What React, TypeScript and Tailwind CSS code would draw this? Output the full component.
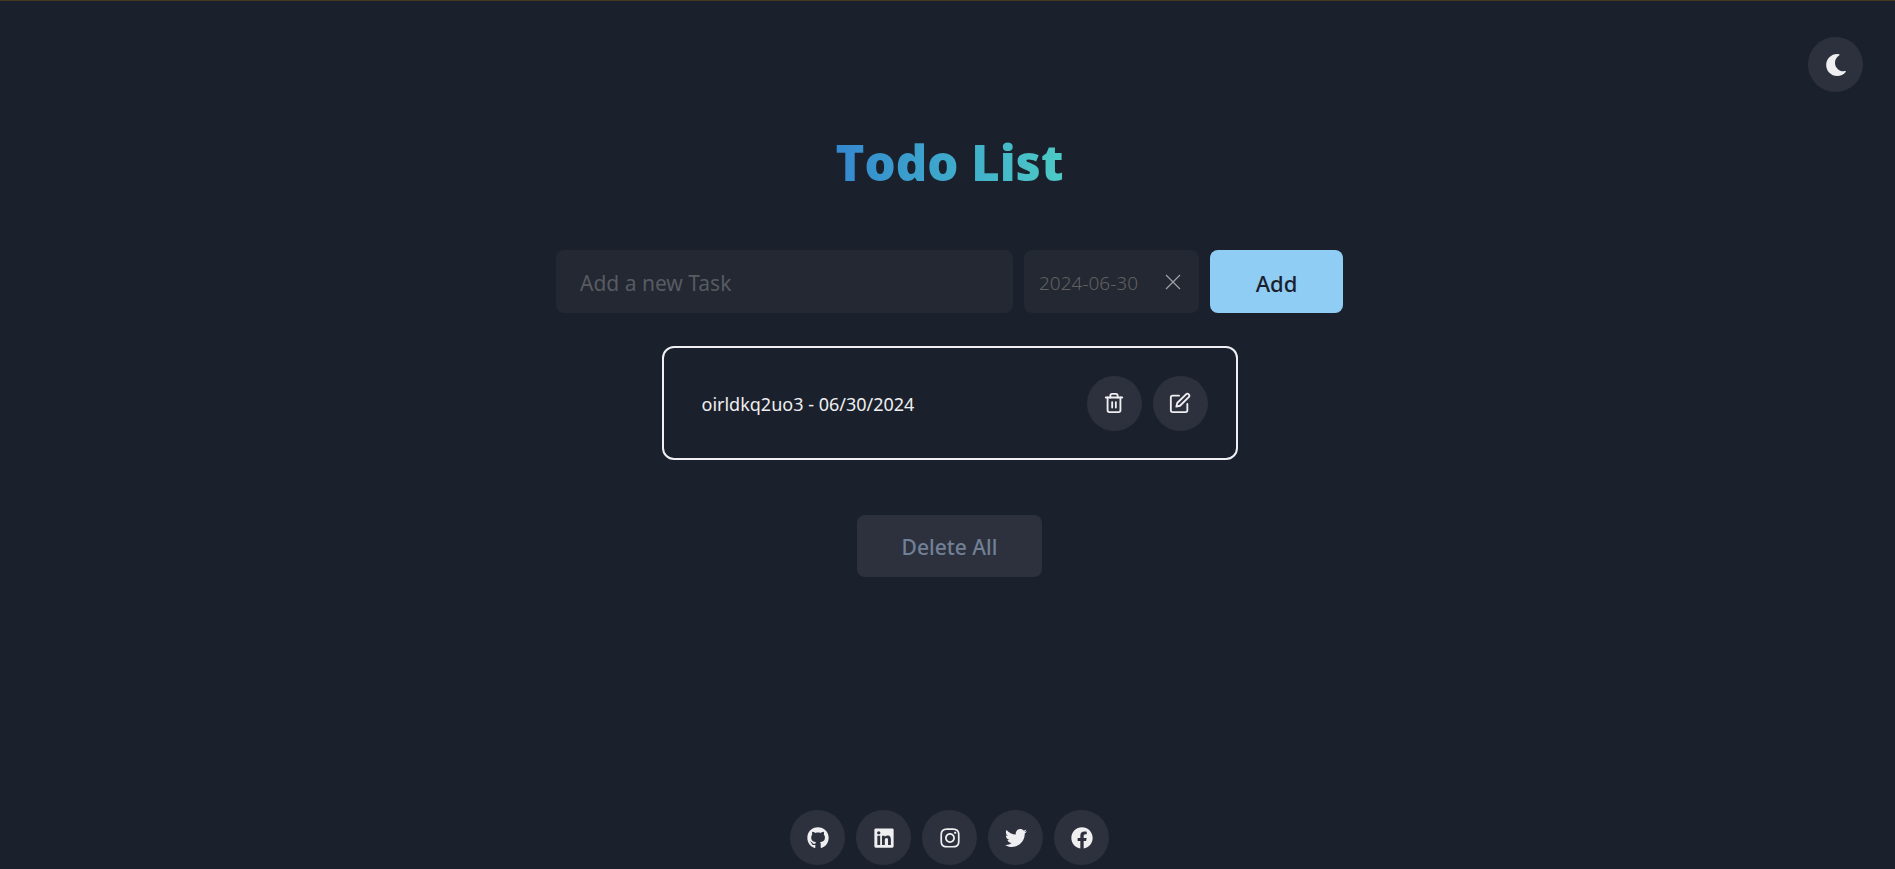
import { useState } from "react";
import type { ReactNode } from "react";
import { FaGithub, FaLinkedin, FaInstagram, FaTwitter, FaFacebook, FaMoon } from "react-icons/fa";
import { FiTrash2, FiEdit } from "react-icons/fi";

const circle =
  "flex size-[55px] shrink-0 items-center justify-center rounded-full bg-[#2d313d] text-[#efeff1] hover:bg-[#3c404c]";

const socials: { name: string; icon: ReactNode }[] = [
  { name: "GitHub", icon: <FaGithub size={22} /> },
  { name: "LinkedIn", icon: <FaLinkedin size={22} /> },
  { name: "Instagram", icon: <FaInstagram size={22} /> },
  { name: "Twitter", icon: <FaTwitter size={22} /> },
  { name: "Facebook", icon: <FaFacebook size={22} /> },
];

export default function App() {
  const [task, setTask] = useState("");
  const [date, setDate] = useState("2024-06-30");

  return (
    <div className="flex min-h-screen flex-col border-t border-[#463a20] bg-[#1b212c] pb-1 pl-1 font-['Noto_Sans',sans-serif] text-[#efeff1]">
      <header className="flex justify-end pt-9 pr-8">
        <button type="button" aria-label="Toggle color mode" className={circle}>
          <FaMoon size={22} />
        </button>
      </header>

      <main className="flex grow flex-col items-center px-4 pt-9">
        <h1 className="bg-linear-to-r from-[#3588cf] to-[#4dcac5] bg-clip-text font-['Open_Sans',sans-serif] text-[49px] leading-[68px] font-extrabold text-transparent">
          Todo List
        </h1>

        <form className="mt-[54px] flex w-full max-w-[787px] gap-[11px]" onSubmit={(e) => e.preventDefault()}>
          <input
            type="text"
            aria-label="New task"
            placeholder="Add a new Task"
            value={task}
            onChange={(e) => setTask(e.target.value)}
            className="h-[63px] min-w-0 grow rounded-lg bg-[#232833] px-6 pt-0.5 text-[21px] outline-none placeholder:text-[#585b61]"
          />
          <div className="flex h-[63px] w-[175px] items-center justify-between rounded-lg bg-[#232833] pr-[18px] pl-[15px]">
            <input
              type="text"
              aria-label="Due date"
              value={date}
              onChange={(e) => setDate(e.target.value)}
              className="w-[108px] bg-transparent pt-1 text-[19px] font-light text-[#606060] outline-none"
            />
            <button type="button" aria-label="Clear date" onClick={() => setDate("")} className="text-[#a0a2a6]">
              <svg viewBox="0 0 16 16" className="size-4" fill="none" stroke="currentColor" strokeWidth="1.2" aria-hidden="true">
                <path d="M1 1 15 15M15 1 1 15" />
              </svg>
            </button>
          </div>
          <button type="submit" className="h-[63px] w-[133px] rounded-lg bg-[#90cdf4] pt-1 text-[22px] font-medium text-[#1a202c]">
            Add
          </button>
        </form>

        <ul className="mt-[33px] w-full max-w-[576px]">
          <li className="flex h-[114px] items-center gap-[11px] rounded-xl border-2 border-[#efeff4] pr-7 pl-[38px]">
            <span className="grow pt-0.5 text-lg">oirldkq2uo3 - 06/30/2024</span>
            <button type="button" aria-label="Delete task" className={circle}>
              <FiTrash2 size={22} />
            </button>
            <button type="button" aria-label="Edit task" className={circle}>
              <FiEdit size={22} />
            </button>
          </li>
        </ul>

        <button type="button" className="mt-[55px] h-[62px] w-[185px] rounded-lg bg-[#2d313d] pt-1 text-[21px] font-medium text-[#718096]">
          Delete All
        </button>
      </main>

      <footer className="flex justify-center gap-[11px]">
        {socials.map((s) => (
          <a key={s.name} href="#" aria-label={s.name} className={circle}>
            {s.icon}
          </a>
        ))}
      </footer>
    </div>
  );
}
